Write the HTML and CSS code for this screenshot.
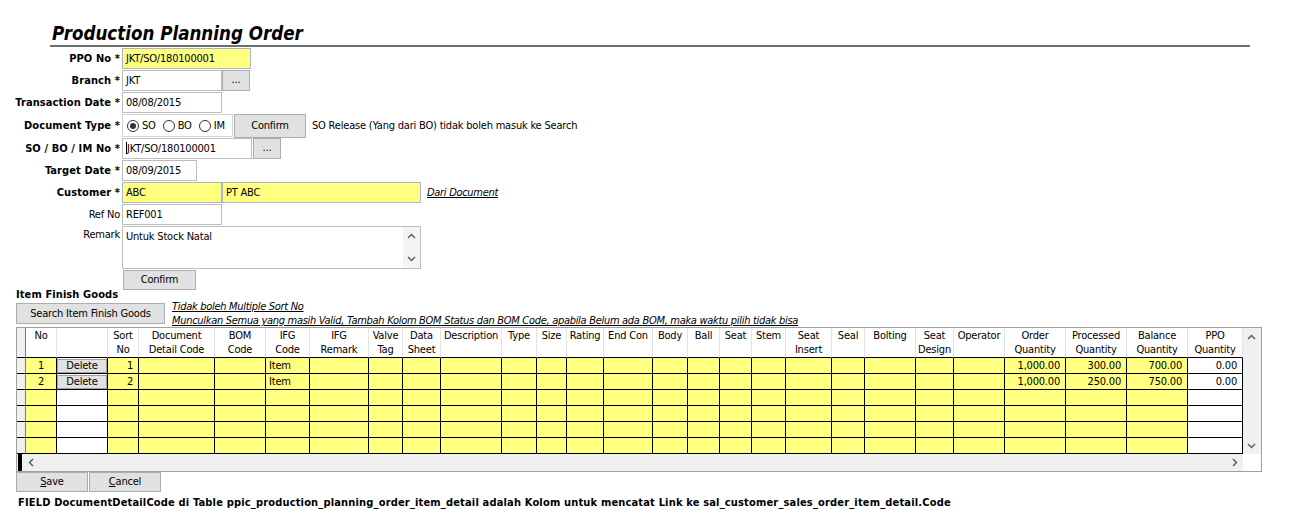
FILE: index.html
```html
<!DOCTYPE html>
<html lang="id">
<head>
<meta charset="utf-8">
<title>Production Planning Order</title>
<link rel="stylesheet" href="styles.css">
</head>
<body>
<div class="page">
  <div class="title-bar"><h1 class="title">Production Planning Order</h1></div>

  <div class="form">
    <div class="row">
      <div class="lbl req">PPO No *</div>
      <div class="in yellow w129">JKT/SO/180100001</div>
    </div>
    <div class="row">
      <div class="lbl req">Branch *</div>
      <div class="in w99">JKT</div>
      <div class="btn dots">...</div>
    </div>
    <div class="row">
      <div class="lbl req">Transaction Date *</div>
      <div class="in w99">08/08/2015</div>
    </div>
    <div class="row tall">
      <div class="lbl req lbl-tall">Document Type *</div>
      <div class="radios">
        <span class="radio-item"><span class="radio on"></span>SO</span>
        <span class="radio-item"><span class="radio"></span>BO</span>
        <span class="radio-item"><span class="radio"></span>IM</span>
      </div>
      <div class="btn confirm-doc">Confirm</div>
      <div class="hint">SO Release (Yang dari BO) tidak boleh masuk ke Search</div>
    </div>
    <div class="row">
      <div class="lbl req">SO / BO / IM No *</div>
      <div class="in w130"><span class="caret"></span>JKT/SO/180100001</div>
      <div class="btn dots dots-so">...</div>
    </div>
    <div class="row">
      <div class="lbl req">Target Date *</div>
      <div class="in w75">08/09/2015</div>
    </div>
    <div class="row">
      <div class="lbl req">Customer *</div>
      <div class="in yellow w99">ABC</div>
      <div class="in yellow w199">PT ABC</div>
      <a class="note-link doc-link">Dari Document</a>
    </div>
    <div class="row">
      <div class="lbl">Ref No</div>
      <div class="in w99">REF001</div>
    </div>
    <div class="row area">
      <div class="lbl lbl-top">Remark</div>
      <div class="textarea">
        <div class="ta-text">Untuk Stock Natal</div>
        <div class="ta-scroll">
          <svg class="chev" width="9" height="6" viewBox="0 0 9 6"><polyline points="1,5 4.5,1.5 8,5" /></svg>
          <svg class="chev" width="9" height="6" viewBox="0 0 9 6"><polyline points="1,1 4.5,4.5 8,1" /></svg>
        </div>
      </div>
    </div>
    <div class="row short">
      <div class="lbl"></div>
      <div class="btn confirm-main">Confirm</div>
    </div>
  </div>

  <section class="items">
    <div class="section-title">Item Finish Goods</div>
    <div class="toolbar">
      <div class="btn search-btn">Search Item Finish Goods</div>
      <div class="notes">
        <a class="note-link">Tidak boleh Multiple Sort No</a>
        <a class="note-link">Munculkan Semua yang masih Valid, Tambah Kolom BOM Status dan BOM Code, apabila Belum ada BOM, maka waktu pilih tidak bisa</a>
      </div>
    </div>

    <div class="grid">
      <div class="dg-wrap">
        <table class="dg">
          <colgroup>
            <col class="c-rh"><col class="c31"><col class="c51"><col class="c31"><col class="c76"><col class="c51"><col class="c44"><col class="c59"><col class="c34"><col class="c38"><col class="c61"><col class="c35"><col class="c30"><col class="c37"><col class="c49"><col class="c35"><col class="c32"><col class="c32"><col class="c34"><col class="c46"><col class="c33"><col class="c51"><col class="c38"><col class="c51"><col class="c61"><col class="c61"><col class="c61"><col class="c55">
          </colgroup>
          <thead>
            <tr>
              <th class="rh"></th>
              <th>No</th><th></th><th>Sort<br>No</th><th>Document<br>Detail Code</th><th>BOM<br>Code</th><th>IFG<br>Code</th><th>IFG<br>Remark</th><th>Valve<br>Tag</th><th>Data<br>Sheet</th><th>Description</th><th>Type</th><th>Size</th><th>Rating</th><th>End Con</th><th>Body</th><th>Ball</th><th>Seat</th><th>Stem</th><th>Seat<br>Insert</th><th>Seal</th><th>Bolting</th><th>Seat<br>Design</th><th>Operator</th><th>Order<br>Quantity</th><th>Processed<br>Quantity</th><th>Balance<br>Quantity</th><th>PPO<br>Quantity</th>
            </tr>
          </thead>
          <tbody>
            <tr>
              <td class="rh"></td><td class="ctr">1</td><td class="del"><span class="del-btn">Delete</span></td><td class="num">1</td><td></td><td></td><td>Item</td><td></td><td></td><td></td><td></td><td></td><td></td><td></td><td></td><td></td><td></td><td></td><td></td><td></td><td></td><td></td><td></td><td></td><td class="num">1,000.00</td><td class="num">300.00</td><td class="num">700.00</td><td class="num white">0.00</td>
            </tr>
            <tr>
              <td class="rh"></td><td class="ctr">2</td><td class="del"><span class="del-btn">Delete</span></td><td class="num">2</td><td></td><td></td><td>Item</td><td></td><td></td><td></td><td></td><td></td><td></td><td></td><td></td><td></td><td></td><td></td><td></td><td></td><td></td><td></td><td></td><td></td><td class="num">1,000.00</td><td class="num">250.00</td><td class="num">750.00</td><td class="num white">0.00</td>
            </tr>
            <tr>
              <td class="rh"></td><td></td><td class="white"></td><td></td><td></td><td></td><td></td><td></td><td></td><td></td><td></td><td></td><td></td><td></td><td></td><td></td><td></td><td></td><td></td><td></td><td></td><td></td><td></td><td></td><td></td><td></td><td></td><td class="white"></td>
            </tr>
            <tr>
              <td class="rh"></td><td></td><td class="white"></td><td></td><td></td><td></td><td></td><td></td><td></td><td></td><td></td><td></td><td></td><td></td><td></td><td></td><td></td><td></td><td></td><td></td><td></td><td></td><td></td><td></td><td></td><td></td><td></td><td class="white"></td>
            </tr>
            <tr>
              <td class="rh"></td><td></td><td class="white"></td><td></td><td></td><td></td><td></td><td></td><td></td><td></td><td></td><td></td><td></td><td></td><td></td><td></td><td></td><td></td><td></td><td></td><td></td><td></td><td></td><td></td><td></td><td></td><td></td><td class="white"></td>
            </tr>
            <tr>
              <td class="rh"></td><td></td><td class="white"></td><td></td><td></td><td></td><td></td><td></td><td></td><td></td><td></td><td></td><td></td><td></td><td></td><td></td><td></td><td></td><td></td><td></td><td></td><td></td><td></td><td></td><td></td><td></td><td></td><td class="white"></td>
            </tr>
          </tbody>
        </table>
      </div>
      <div class="vscroll">
        <span class="arrow-box"><svg class="chev" width="9" height="6" viewBox="0 0 9 6"><polyline points="1,5 4.5,1.5 8,5" /></svg></span>
        <span class="arrow-box"><svg class="chev" width="9" height="6" viewBox="0 0 9 6"><polyline points="1,1 4.5,4.5 8,1" /></svg></span>
      </div>
      <div class="hscroll">
        <span class="hs-bar"></span>
        <span class="arrow-box"><svg class="chev" width="6" height="9" viewBox="0 0 6 9"><polyline points="5,1 1.5,4.5 5,8" /></svg></span>
        <span class="hs-fill"></span>
        <span class="arrow-box"><svg class="chev" width="6" height="9" viewBox="0 0 6 9"><polyline points="1,1 4.5,4.5 1,8" /></svg></span>
      </div>
      <div class="corner"></div>
    </div>

    <div class="actions">
      <div class="btn act-btn"><u>S</u>ave</div>
      <div class="btn act-btn"><u>C</u>ancel</div>
    </div>
    <p class="footer-note">FIELD DocumentDetailCode di Table ppic_production_planning_order_item_detail adalah Kolom untuk mencatat Link ke sal_customer_sales_order_item_detail.Code</p>
  </section>
</div>
</body>
</html>
```

FILE: styles.css
```css
* { box-sizing: border-box; }

html, body {
  margin: 0;
  padding: 0;
  background: #ffffff;
}

body {
  width: 1300px;
  height: 525px;
  overflow: hidden;
  font-family: "DejaVu Sans Condensed", "DejaVu Sans", "Liberation Sans", sans-serif;
  font-size: 11px;
  letter-spacing: -0.2px;
  color: #000000;
}

/* ---------- title ---------- */
.title-bar {
  margin: 23px 0 0 50px;
  width: 1200px;
  padding-left: 2px;
  border-bottom: 2px solid #6f6f6f;
}

.title {
  margin: 0;
  font-size: 18.6px;
  line-height: 22px;
  letter-spacing: 0;
  font-weight: bold;
  font-style: italic;
}

/* ---------- form ---------- */
.form {
  margin-top: 1px;
  display: flex;
  flex-direction: column;
}

.row {
  display: flex;
  align-items: flex-start;
  height: 22px;
}

.row.tall { height: 24px; }
.row.area { height: 44px; }
.row.short { height: 20px; }

.lbl {
  width: 122px;
  flex: none;
  padding-right: 2px;
  text-align: right;
  line-height: 21px;
  white-space: nowrap;
}

.lbl.req {
  font-weight: bold;
  letter-spacing: 0.1px;
}
.lbl-tall { line-height: 23px; }
.lbl-top { line-height: 17px; }

.in {
  flex: none;
  height: 21px;
  border: 1px solid #bcbcbc;
  background: #ffffff;
  padding: 0 3px;
  line-height: 19px;
  white-space: nowrap;
  overflow: hidden;
}

.in.yellow {
  background: #ffff80;
  border-color: #a7b6cc;
}

.w75 { width: 75px; }
.w99 { width: 100px; }
.w129 { width: 129px; }
.w130 { width: 130px; }
.w199 { width: 199px; }

.caret {
  display: inline-block;
  width: 1px;
  height: 12px;
  background: #000;
  vertical-align: -2px;
}

.btn {
  flex: none;
  height: 21px;
  background: #e1e1e1;
  border: 1px solid #adadad;
  text-align: center;
  line-height: 19px;
  white-space: nowrap;
}

.dots {
  width: 28px;
  line-height: 17px;
}

.dots-so { margin-left: 1px; }

.radios {
  flex: none;
  width: 111px;
  height: 23px;
  border: 1px solid #d4d4d4;
  background: #ffffff;
  display: flex;
  align-items: center;
  padding-left: 4px;
}

.radio-item {
  display: flex;
  align-items: center;
  margin-right: 7px;
  line-height: 14px;
}

.radio {
  width: 12px;
  height: 12px;
  border: 1px solid #333333;
  border-radius: 50%;
  margin-right: 3px;
  background: #ffffff;
  display: flex;
  align-items: center;
  justify-content: center;
}

.radio.on::after {
  content: "";
  width: 6px;
  height: 6px;
  border-radius: 50%;
  background: #333333;
}

.confirm-doc {
  width: 72px;
  height: 24px;
  margin-left: 1px;
  line-height: 22px;
}

.hint {
  margin-left: 6px;
  line-height: 24px;
  white-space: nowrap;
}

.note-link {
  color: #000000;
  font-style: italic;
  text-decoration: underline;
  white-space: nowrap;
  letter-spacing: -0.3px;
}

.doc-link {
  margin-left: 6px;
  line-height: 21px;
}

.textarea {
  flex: none;
  width: 299px;
  height: 43px;
  border: 1px solid #bcbcbc;
  display: flex;
}

.ta-text {
  flex: 1;
  padding: 3px 3px 0;
  line-height: 14px;
}

.ta-scroll {
  width: 17px;
  background: #f4f4f4;
  display: flex;
  flex-direction: column;
  justify-content: space-between;
  align-items: center;
  padding: 6px 0 6px;
}

.chev {
  display: block;
  fill: none;
  stroke: #5f5f5f;
  stroke-width: 1.5;
}

.confirm-main {
  width: 73px;
  height: 20px;
  margin-left: 1px;
  line-height: 18px;
}

/* ---------- items ---------- */
.items {
  padding-left: 16px;
}

.section-title {
  font-weight: bold;
  letter-spacing: 0.1px;
  line-height: 10px;
  height: 10px;
}

.toolbar {
  display: flex;
  align-items: flex-start;
  height: 27px;
}

.search-btn {
  width: 149px;
  height: 21px;
  margin-top: 3px;
}

.notes {
  display: flex;
  flex-direction: column;
  margin-left: 7px;
  line-height: 14px;
}

/* ---------- data grid ---------- */
.grid {
  width: 1246px;
  height: 145px;
  border: 1px solid #a0a0a0;
  display: grid;
  grid-template-columns: 1226px 18px;
  grid-template-rows: 126px 17px;
}

.dg-wrap {
  overflow: hidden;
}

.dg {
  width: 1226px;
  table-layout: fixed;
  border-collapse: separate;
  border-spacing: 0;
}

.c-rh { width: 9px; }
.c30 { width: 30px; }
.c31 { width: 31px; }
.c32 { width: 32px; }
.c33 { width: 33px; }
.c34 { width: 34px; }
.c35 { width: 35px; }
.c37 { width: 37px; }
.c38 { width: 38px; }
.c44 { width: 44px; }
.c46 { width: 46px; }
.c49 { width: 49px; }
.c51 { width: 51px; }
.c55 { width: 55px; }
.c59 { width: 59px; }
.c61 { width: 61px; }
.c76 { width: 76px; }

.dg thead tr { height: 30px; }
.dg tbody tr { height: 16px; }

.dg th {
  font-weight: normal;
  vertical-align: top;
  text-align: center;
  padding: 1px 0 0;
  line-height: 14px;
  background: #ffffff;
  border-right: 1px solid #e3e3e3;
  border-bottom: 1px solid #000000;
  white-space: nowrap;
  overflow: hidden;
}

.dg td {
  padding: 0 3px;
  line-height: 14px;
  background: #ffff80;
  border-right: 1px solid #000000;
  border-bottom: 1px solid #000000;
  white-space: nowrap;
  overflow: hidden;
}

.dg .rh {
  background: #f0f0f0;
  border-right: 1px solid #7a7a7a;
  padding: 0;
}

.dg td.ctr { text-align: center; }
.dg td.num { text-align: right; padding-right: 5px; }
.dg td.white { background: #ffffff; }

.dg td.del {
  background: #ffffff;
  padding: 0;
}

.del-btn {
  display: block;
  height: 14px;
  background: #e1e1e1;
  border: 1px solid #a0a0a0;
  text-align: center;
  line-height: 12px;
}

.vscroll {
  grid-row: 1;
  grid-column: 2;
  background: #f0f0f0;
  display: flex;
  flex-direction: column;
  justify-content: space-between;
}

.arrow-box {
  width: 17px;
  height: 17px;
  display: flex;
  align-items: center;
  justify-content: center;
  flex: none;
}

.hscroll {
  grid-row: 2;
  grid-column: 1;
  background: #f0f0f0;
  display: flex;
  align-items: center;
}

.hs-bar {
  width: 4px;
  height: 17px;
  background: #000000;
  margin-left: 1px;
  flex: none;
}

.hs-fill { flex: 1; }

.corner {
  grid-row: 2;
  grid-column: 2;
  background: #ffffff;
}

/* ---------- actions ---------- */
.actions {
  display: flex;
  gap: 1px;
}

.act-btn {
  width: 72px;
  height: 20px;
  line-height: 18px;
}

.footer-note {
  margin: 4px 0 0 2px;
  font-weight: bold;
  letter-spacing: 0.17px;
  line-height: 14px;
  white-space: nowrap;
}
```
